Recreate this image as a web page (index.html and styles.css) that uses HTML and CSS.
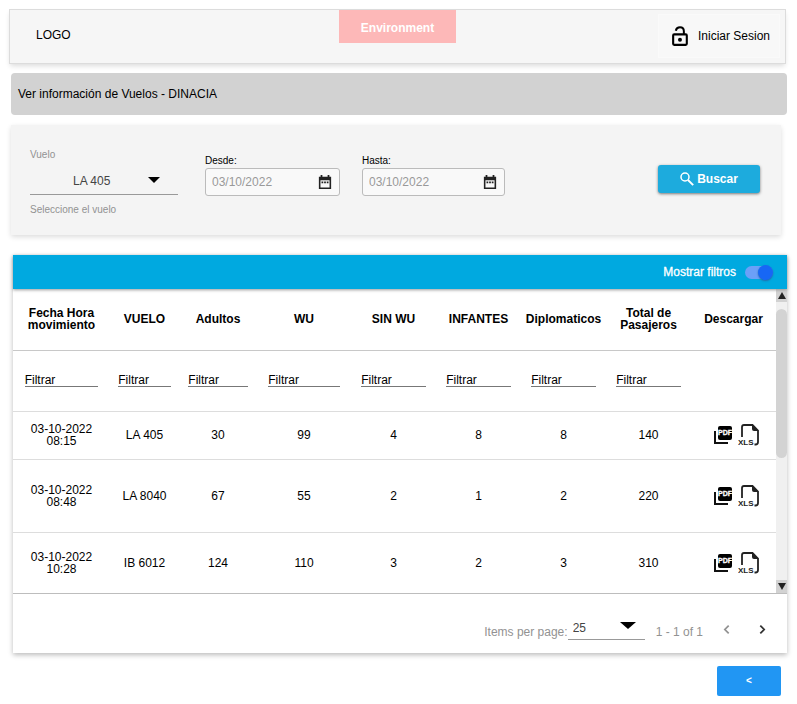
FILE: index.html
```html
<!DOCTYPE html>
<html lang="es">
<head>
<meta charset="utf-8">
<title>Vuelos</title>
<link rel="stylesheet" href="styles.css">
</head>
<body>
<header class="topbar">
  <span class="logo">LOGO</span>
  <strong class="environment">Environment</strong>
  <button class="login" type="button">
    <svg class="lock" viewBox="0 0 18 20" aria-hidden="true">
      <rect x="2" y="8" width="13" height="10" rx="1" fill="none" stroke="currentColor" stroke-width="2"/>
      <path d="M4.500 4.500C5 2.400 6.500 1.300 8.500 1.300c2.200 0 3.700 1.500 3.700 3.700V8" fill="none" stroke="currentColor" stroke-width="1.900"/>
      <circle cx="8.500" cy="13" r="1.900" fill="currentColor"/>
    </svg>
    Iniciar Sesion
  </button>
</header>

<h1 class="title">Ver información de Vuelos - DINACIA</h1>

<form class="search">
  <div class="flight">
    <label class="muted" for="flight">Vuelo</label>
    <div class="select"><select id="flight"><option>LA 405</option></select></div>
    <span class="muted">Seleccione el vuelo</span>
  </div>
  <div class="dates">
    <div class="date">
      <label for="from">Desde:</label>
      <div class="date-box">
        <input id="from" type="text" value="03/10/2022">
        <button type="button" aria-label="Desde">
          <svg viewBox="0 0 16 16"><path fill="currentColor" fill-rule="evenodd" d="M3 0h2v2h6V0h2v2h2v14H1V2h2zM2.800 6v8.300h10.400V6z"/><path fill="currentColor" d="M4 7.500h2v1.800H4zM7 7.500h2v1.800H7zM10 7.500h2v1.800h-2z"/></svg>
        </button>
      </div>
    </div>
    <div class="date date-wide">
      <label for="to">Hasta:</label>
      <div class="date-box">
        <input id="to" type="text" value="03/10/2022">
        <button type="button" aria-label="Hasta">
          <svg viewBox="0 0 16 16"><path fill="currentColor" fill-rule="evenodd" d="M3 0h2v2h6V0h2v2h2v14H1V2h2zM2.800 6v8.300h10.400V6z"/><path fill="currentColor" d="M4 7.500h2v1.800H4zM7 7.500h2v1.800H7zM10 7.500h2v1.800h-2z"/></svg>
        </button>
      </div>
    </div>
  </div>
  <button class="submit" type="button">
    <svg viewBox="0 0 14 14" aria-hidden="true"><circle cx="5" cy="5" r="4" fill="none" stroke="currentColor" stroke-width="1.500"/><path d="M8 8l5.200 5.200" stroke="currentColor" stroke-width="1.900"/></svg>
    Buscar
  </button>
</form>

<main class="card">
  <div class="card-bar">
    <label for="filters">Mostrar filtros</label>
    <input class="toggle" id="filters" type="checkbox" role="switch" checked>
  </div>
  <div class="viewport">
    <table>
      <colgroup><col class="c-date"><col class="c-flight"><col class="c-adults"><col class="c-wu"><col class="c-std"><col class="c-std"><col class="c-std"><col class="c-std"><col class="c-std"></colgroup>
      <thead>
        <tr><th>Fecha Hora movimiento</th><th>VUELO</th><th>Adultos</th><th>WU</th><th>SIN WU</th><th>INFANTES</th><th>Diplomaticos</th><th>Total de Pasajeros</th><th>Descargar</th></tr>
        <tr class="filters">
          <td><input type="text" value="Filtrar" aria-label="Fecha Hora"></td>
          <td><input type="text" value="Filtrar" aria-label="Vuelo"></td>
          <td><input type="text" value="Filtrar" aria-label="Adultos"></td>
          <td><input type="text" value="Filtrar" aria-label="WU"></td>
          <td><input type="text" value="Filtrar" aria-label="SIN WU"></td>
          <td><input type="text" value="Filtrar" aria-label="Infantes"></td>
          <td><input type="text" value="Filtrar" aria-label="Diplomaticos"></td>
          <td><input type="text" value="Filtrar" aria-label="Total"></td>
          <td></td>
        </tr>
      </thead>
      <tbody>
        <tr class="short"><td>03-10-2022 08:15</td><td>LA 405</td><td>30</td><td>99</td><td>4</td><td>8</td><td>8</td><td>140</td><td>
          <div class="files">
            <button type="button"><svg class="pdf" viewBox="0 0 20 20"><path fill="none" stroke="#111" stroke-width="2" d="M2 6v12h13"/><rect x="5" y="1" width="14" height="14" rx="2"/><text x="12" y="10" text-anchor="middle">PDF</text></svg></button>
            <button type="button"><svg class="xls" viewBox="0 0 22 24"><path fill="none" stroke="#222" stroke-width="1.800" d="M4 14V4Q4 2 6 2H14.500L20 7.500V19Q20 21.500 17.500 21.500H16.500"/><path fill="#222" d="M14 1.500 20.500 8H16Q14 8 14 6z"/><text x="0" y="22">XLS</text></svg></button>
          </div>
        </td></tr>
        <tr class="tall"><td>03-10-2022 08:48</td><td>LA 8040</td><td>67</td><td>55</td><td>2</td><td>1</td><td>2</td><td>220</td><td>
          <div class="files">
            <button type="button"><svg class="pdf" viewBox="0 0 20 20"><path fill="none" stroke="#111" stroke-width="2" d="M2 6v12h13"/><rect x="5" y="1" width="14" height="14" rx="2"/><text x="12" y="10" text-anchor="middle">PDF</text></svg></button>
            <button type="button"><svg class="xls" viewBox="0 0 22 24"><path fill="none" stroke="#222" stroke-width="1.800" d="M4 14V4Q4 2 6 2H14.500L20 7.500V19Q20 21.500 17.500 21.500H16.500"/><path fill="#222" d="M14 1.500 20.500 8H16Q14 8 14 6z"/><text x="0" y="22">XLS</text></svg></button>
          </div>
        </td></tr>
        <tr><td>03-10-2022 10:28</td><td>IB 6012</td><td>124</td><td>110</td><td>3</td><td>2</td><td>3</td><td>310</td><td>
          <div class="files">
            <button type="button"><svg class="pdf" viewBox="0 0 20 20"><path fill="none" stroke="#111" stroke-width="2" d="M2 6v12h13"/><rect x="5" y="1" width="14" height="14" rx="2"/><text x="12" y="10" text-anchor="middle">PDF</text></svg></button>
            <button type="button"><svg class="xls" viewBox="0 0 22 24"><path fill="none" stroke="#222" stroke-width="1.800" d="M4 14V4Q4 2 6 2H14.500L20 7.500V19Q20 21.500 17.500 21.500H16.500"/><path fill="#222" d="M14 1.500 20.500 8H16Q14 8 14 6z"/><text x="0" y="22">XLS</text></svg></button>
          </div>
        </td></tr>
      </tbody>
    </table>
    <div class="scrollbar" aria-hidden="true">
      <span class="arrow arrow-up"></span>
      <span class="track"><span class="thumb"></span></span>
      <span class="arrow arrow-down"></span>
    </div>
  </div>
  <div class="pager">
    <label for="size">Items per page:</label>
    <div class="select select-size"><select id="size"><option>25</option></select></div>
    <span class="range">1 - 1 of 1</span>
    <button class="prev" type="button" aria-label="Anterior"><svg viewBox="0 0 8 10"><path d="M6 1.500L2.500 5 6 8.500"/></svg></button>
    <button type="button" aria-label="Siguiente"><svg viewBox="0 0 8 10"><path d="M2 1.500L5.500 5 2 8.500"/></svg></button>
  </div>
</main>

<button class="back" type="button">&lt;</button>
</body>
</html>
```

FILE: styles.css
```css
* { box-sizing: border-box; }
body {
  display: flex;
  flex-direction: column;
  margin: 0;
  padding: 10px 10px 8px;
  background: #fff;
  color: #000;
  font: 12px/14px "Liberation Sans", Arial, sans-serif;
}
button, input, select {
  margin: 0;
  padding: 0;
  border: 0;
  background: none;
  color: inherit;
  font: inherit;
}
svg { display: block; }

.topbar {
  display: grid;
  grid-template-columns: 1fr auto 1fr;
  align-items: start;
  height: 53px;
  margin-right: 2px;
  background: #f6f6f6;
  box-shadow: 0 0 0 1px #dcdcdc, 0 3px 5px #ddd;
}
.logo { padding: 18px 26px; }
.environment {
  padding: 11px 22px 8px;
  background: #fdb8b8;
  color: #fff;
}
.login {
  display: flex;
  align-items: center;
  justify-self: end;
  gap: 8px;
  height: 44px;
  margin: 4px 5px;
  padding: 0 9px 0 12px;
  border: 1px solid #fafafa;
  background: #f8f8f8;
}
.lock { width: 19px; height: 21px; }

.title {
  margin: 10px 0 0 1px;
  padding: 14px 7px;
  border-radius: 4px;
  background: #d2d2d2;
  font-size: 12px;
  font-weight: 400;
}

.search {
  display: flex;
  align-items: flex-start;
  height: 110px;
  margin: 10px 6px 0 1px;
  padding: 23px 21px 0 19px;
  background: #f4f4f4;
  box-shadow: 0 2px 5px #ddd;
}
.muted { color: #929292; font-size: 10px; }
.flight {
  display: flex;
  flex-direction: column;
  width: 148px;
  margin-right: 27px;
}
.select {
  position: relative;
  border-bottom: 1px solid #999;
  color: #444;
}
.select select {
  width: 100%;
  height: 32px;
  padding: 6px 43px 0;
  appearance: none;
}
.select::after {
  content: "";
  position: absolute;
  top: 15px;
  right: 18px;
  border: 6px solid transparent;
  border-top: 6px solid #000;
  border-bottom: 0;
  pointer-events: none;
}
.flight span { margin-top: 8px; }
.dates { display: flex; gap: 22px; padding-top: 6px; }
.date { width: 135px; }
.date-wide { width: 143px; }
.date label { display: block; font-size: 10px; }
.date-box {
  display: flex;
  align-items: center;
  height: 28px;
  padding: 0 7px 0 6px;
  border: 1px solid #bbb;
  border-radius: 3px;
  background: #f9f9f9;
}
.date-box input { flex: 1; min-width: 0; color: #999; }
.date-box svg { width: 14px; height: 14px; color: #222; }
.submit {
  display: flex;
  align-items: center;
  justify-content: center;
  gap: 3px;
  width: 102px;
  height: 28px;
  margin: 17px 0 0 auto;
  border-radius: 3px;
  background: #1dabdd;
  box-shadow: 0 1px 3px #777;
  color: #fff;
  font-weight: 700;
}
.submit svg { width: 14px; height: 14px; }

.card {
  margin: 20px 0 0 3px;
  background: #fff;
  box-shadow: 0 2px 5px #bbb;
}
.card-bar {
  position: relative;
  display: flex;
  align-items: center;
  justify-content: flex-end;
  gap: 9px;
  height: 34px;
  padding: 0 14px;
  background: #00a9e0;
  box-shadow: 0 1px 3px #999;
  color: #fff;
}
.card-bar label { -webkit-text-stroke: 0.3px #fff; }
.toggle {
  display: flex;
  align-items: center;
  justify-content: flex-end;
  width: 28px;
  height: 13px;
  border-radius: 7px;
  background: #6ba0f8;
  appearance: none;
}
.toggle::before {
  content: "";
  width: 15px;
  height: 15px;
  border-radius: 50%;
  background: #1767f5;
  box-shadow: 0 1px 2px #2668a8;
}
.viewport { display: flex; border-bottom: 1px solid #bdbdbd; }
table {
  flex: 1;
  width: 100%;
  border-collapse: collapse;
  table-layout: fixed;
}
.c-date { width: 97px; }
.c-flight { width: 69px; }
.c-adults { width: 78px; }
.c-wu { width: 94px; }
.c-std { width: 85px; }
th, td {
  height: 61px;
  padding: 0;
  border-bottom: 1px solid #ddd;
  line-height: 12px;
  text-align: center;
}
th { border-color: #c8c8c8; }
td:first-child { padding: 0 16px; }
.filters td, .filters td:first-child { padding: 0; }
.filters input {
  width: 76%;
  height: 13px;
  border-bottom: 1px solid #777;
}
.short td { height: 48px; }
.tall td { height: 73px; }
tbody tr:last-child td { height: 61px; border: 0; }
.files {
  display: flex;
  align-items: center;
  justify-content: flex-end;
  gap: 5px;
  padding-right: 16px;
}
.pdf { width: 20px; height: 20px; }
.xls { width: 22px; height: 24px; }
.pdf text {
  fill: #fff;
  stroke: #fff;
  stroke-width: 0.3px;
  font: 700 7px "Liberation Sans", Arial, sans-serif;
}
.xls text { fill: #222; font: 700 8px "Liberation Sans", Arial, sans-serif; }

.scrollbar {
  display: flex;
  flex-direction: column;
  width: 13px;
  background: #f0f0f0;
}
.arrow {
  display: flex;
  align-items: center;
  justify-content: center;
  height: 13px;
  background: #d2d2d2;
}
.arrow::before {
  content: "";
  border: 4px solid transparent;
}
.arrow-up::before { border-top: 0; border-bottom: 7px solid #222; }
.arrow-down::before { border-bottom: 0; border-top: 7px solid #222; }
.track { flex: 1; padding-top: 7px; }
.thumb { display: block; height: 55%; border-radius: 6px; background: #d3d3d3; }

.pager {
  display: flex;
  align-items: center;
  justify-content: flex-end;
  height: 59px;
  padding: 0 20px;
  color: #929292;
}
.pager label, .range { padding-top: 16px; }
.select-size { width: 77px; margin-right: 11px; }
.select-size select { padding: 10px 5px 0; }
.select-size::after { right: 9px; border-width: 7px 8px 0; }
.pager button { margin-left: 27px; color: #333; }
.pager .prev { margin-left: 19px; color: #929292; }
.pager button svg {
  width: 9px;
  height: 11px;
  margin-top: 11px;
  fill: none;
  stroke: currentColor;
  stroke-width: 1.600;
}
.back {
  align-self: flex-end;
  width: 64px;
  height: 30px;
  margin: 13px 6px 0 0;
  border-radius: 2px;
  background: #2196f3;
  color: #fff;
  font-size: 10px;
  font-weight: 700;
}
```
